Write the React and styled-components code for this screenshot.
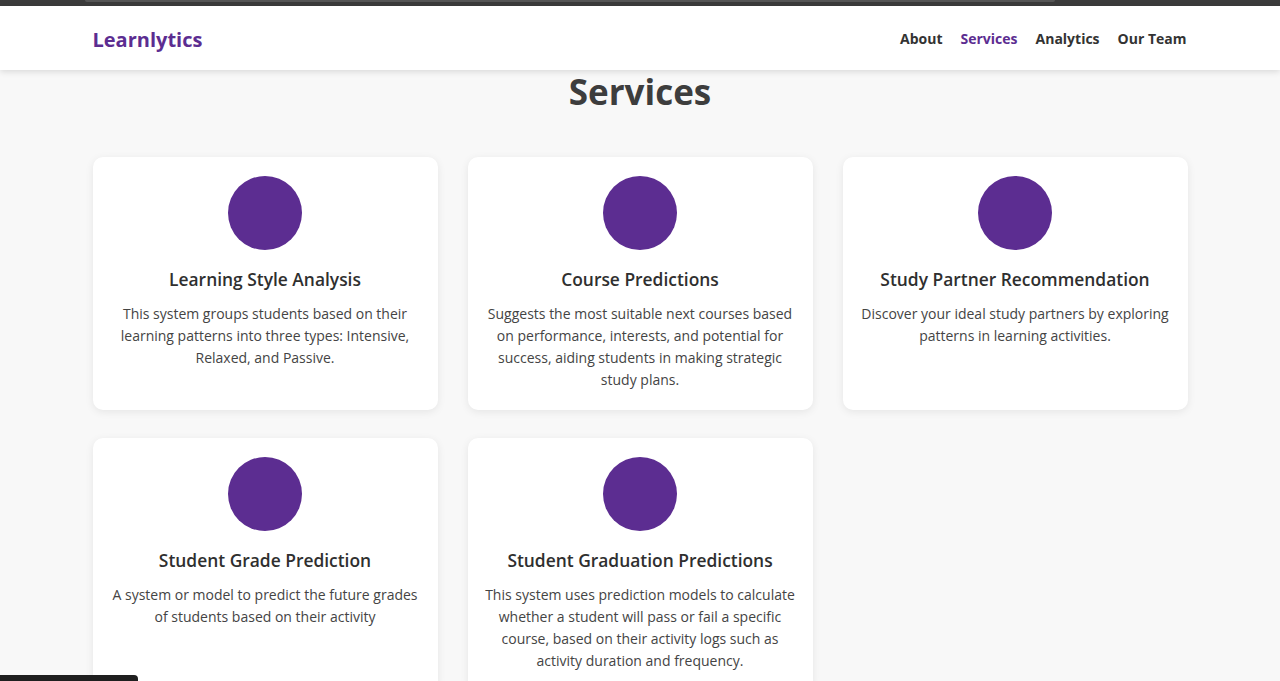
import React from 'react';
import styled, { createGlobalStyle } from 'styled-components';

const services = [
  {
    title: 'Learning Style Analysis',
    text: 'This system groups students based on their learning patterns into three types: Intensive, Relaxed, and Passive.',
  },
  {
    title: 'Course Predictions',
    text: 'Suggests the most suitable next courses based on performance, interests, and potential for success, aiding students in making strategic study plans.',
  },
  {
    title: 'Study Partner Recommendation',
    text: 'Discover your ideal study partners by exploring patterns in learning activities.',
  },
  {
    title: 'Student Grade Prediction',
    text: 'A system or model to predict the future grades of students based on their activity',
  },
  {
    title: 'Student Graduation Predictions',
    text: 'This system uses prediction models to calculate whether a student will pass or fail a specific course, based on their activity logs such as activity duration and frequency.',
  },
];

const links = ['About', 'Services', 'Analytics', 'Our Team'];

export default function App() {
  return (
    <>
      <GlobalStyle />
      <TopStrip>
        <StripTab />
      </TopStrip>
      <Navbar>
        <NavInner>
          <Brand>Learnlytics</Brand>
          <NavList>
            {links.map((l) => (
              <NavLink key={l} $active={l === 'Services'}>
                {l}
              </NavLink>
            ))}
          </NavList>
        </NavInner>
      </Navbar>
      <Main>
        <Heading>Services</Heading>
        <Grid>
          {services.map((s) => (
            <Card key={s.title}>
              <Icon />
              <CardTitle>{s.title}</CardTitle>
              <CardText>{s.text}</CardText>
            </Card>
          ))}
        </Grid>
      </Main>
      <CornerBar />
    </>
  );
}

const GlobalStyle = createGlobalStyle`
  body {
    margin: 0;
    background: #f8f8f8;
    font-family: 'Open Sans', 'Noto Sans', sans-serif;
    color: #333;
  }
`;

const TopStrip = styled.div`
  height: 6px;
  background: #3b3b3b;
  padding: 0 225px 0 85px;
`;

const StripTab = styled.div`
  height: 2px;
  background: #555;
  border-radius: 0 0 3px 3px;
`;

const Navbar = styled.header`
  background: #fff;
  height: 64px;
  box-shadow: 0 2px 6px rgba(0, 0, 0, 0.12);
  position: relative;
  z-index: 1;
`;

const NavInner = styled.div`
  max-width: 1095px;
  margin: 0 auto;
  height: 100%;
  display: flex;
  align-items: center;
  justify-content: space-between;
`;

const Brand = styled.a`
  font-size: 20px;
  font-weight: 700;
  color: #5c2d91;
  margin-top: 3px;
`;

const NavList = styled.nav`
  display: flex;
  gap: 18px;
  margin-right: 1px;
`;

const NavLink = styled.a`
  font-size: 14px;
  font-weight: 700;
  color: ${(p) => (p.$active ? '#5c2d91' : '#333')};
`;

const Main = styled.main`
  max-width: 1095px;
  margin: 0 auto;
`;

const Heading = styled.h1`
  text-align: center;
  font-size: 35px;
  line-height: 44px;
  font-weight: 700;
  color: #3d3d3d;
  margin: 0 0 43px;
`;

const Grid = styled.div`
  display: grid;
  grid-template-columns: repeat(3, 1fr);
  gap: 28px 30px;
`;

const Card = styled.div`
  background: #fff;
  border-radius: 10px;
  box-shadow: 0 2px 8px rgba(0, 0, 0, 0.08);
  padding: 19px 15px 19px;
  display: flex;
  flex-direction: column;
  align-items: center;
  text-align: center;
`;

const Icon = styled.div`
  width: 74px;
  height: 74px;
  border-radius: 50%;
  background: #5c2d91;
  margin-bottom: 18px;
`;

const CardTitle = styled.h3`
  font-size: 17.4px;
  line-height: 23px;
  font-weight: 600;
  color: #2f2f2f;
  margin: 0 0 12px;
`;

const CardText = styled.p`
  font-size: 14px;
  line-height: 22px;
  color: #444;
  margin: 0;
`;

const CornerBar = styled.div`
  position: fixed;
  left: 0;
  bottom: 0;
  width: 138px;
  height: 6px;
  background: #1f1f1f;
  border-radius: 0 4px 0 0;
`;
